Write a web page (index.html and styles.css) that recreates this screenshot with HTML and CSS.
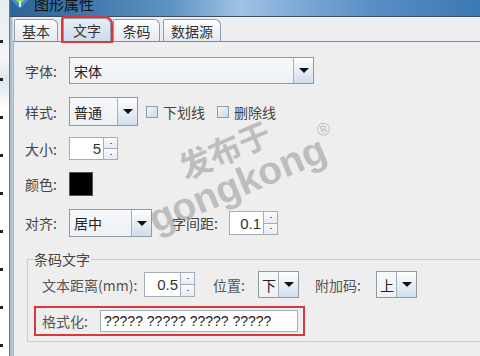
FILE: index.html
```html
<!DOCTYPE html>
<html>
<head>
<meta charset="utf-8">
<link rel="stylesheet" href="styles.css">
</head>
<body>
<div class="screen">
  <div class="behind">
    <div class="behind-line"></div>
  </div>
  <div class="window">
    <div class="titlebar">
      <svg class="app-icon" width="16" height="12" viewBox="0 0 16 12">
        <rect x="2" y="-6" width="12" height="12" transform="rotate(45 8 0)" fill="#3f8fd8"/>
        <rect x="5" y="-3" width="6" height="6" transform="rotate(45 8 0)" fill="#9ad34a"/>
        <rect x="7" y="1" width="2" height="6" fill="#ffffff" opacity="0.8"/>
      </svg>
      <span class="title">图形属性</span>
    </div>
    <div class="body">
      <div class="frame-left"></div>
      <div class="dialog">
        <div class="tabs">
          <div class="tab t1">基本</div>
          <div class="tab t2 selected">文字</div>
          <div class="tab t3">条码</div>
          <div class="tab t4">数据源</div>
        </div>
        <div class="panel">
          <div class="row r1">
            <span class="lbl">字体:</span>
            <div class="combo w-font"><span class="val">宋体</span><span class="arrow"><i></i></span></div>
          </div>
          <div class="row r2">
            <span class="lbl">样式:</span>
            <div class="combo w-style"><span class="val">普通</span><span class="arrow"><i></i></span></div>
            <span class="check c1"></span><span class="ctext">下划线</span>
            <span class="check c2"></span><span class="ctext">删除线</span>
          </div>
          <div class="row r3">
            <span class="lbl">大小:</span>
            <div class="spin w-size"><span class="num">5</span><span class="btns"><b class="up"></b><b class="dn"></b></span></div>
          </div>
          <div class="row r4">
            <span class="lbl">颜色:</span>
            <span class="swatch"></span>
          </div>
          <div class="row r5">
            <span class="lbl">对齐:</span>
            <div class="combo w-align"><span class="val">居中</span><span class="arrow"><i></i></span></div>
            <span class="lbl2">字间距:</span>
            <div class="spin w-gap"><span class="num">0.1</span><span class="btns"><b class="up"></b><b class="dn"></b></span></div>
          </div>
          <div class="group">
            <span class="legend">条码文字</span>
            <div class="grow">
              <span class="glbl">文本距离(mm):</span>
              <div class="spin w-dist"><span class="num">0.5</span><span class="btns"><b class="up"></b><b class="dn"></b></span></div>
              <span class="glbl pos">位置:</span>
              <div class="combo w-small"><span class="val">下</span><span class="arrow"><i></i></span></div>
              <span class="glbl add">附加码:</span>
              <div class="combo w-small"><span class="val">上</span><span class="arrow"><i></i></span></div>
            </div>
            <div class="fmt">
              <span class="flbl">格式化:</span>
              <div class="field">????? ????? ????? ?????</div>
            </div>
          </div>
        </div>
      </div>
    </div>
  </div>
  <div class="watermark">
    <div class="wm1">发布于</div>
    <div class="wm2">gongkong<sup>®</sup></div>
  </div>
</div>
</body>
</html>
```
FILE: styles.css
```css
* { box-sizing: border-box; }
html, body { margin: 0; padding: 0; }
body {
  width: 480px; height: 356px; overflow: hidden;
  font-family: "Noto Sans CJK SC", "Liberation Sans", sans-serif;
  font-size: 13px; color: #333;
  background: #eeeeee;
}
.screen { position: relative; display: flex; width: 480px; height: 356px; overflow: hidden; }
.behind {
  width: 10px; flex: none; height: 356px;
  background: linear-gradient(to bottom, #e8ecf0 0, #f4f6f8 60px, #dfe6ee 80px, #ffffff 110px, #ffffff 356px);
  position: relative;
  border-right: 1px solid #6d7c8c;
}
.behind-line {
  width: 3px; height: 356px;
  background: repeating-linear-gradient(to bottom, transparent 0, transparent 30px, #222 30px, #222 33px, transparent 33px, transparent 38px);
  margin-top: 10px;
}
.window { flex: 1; display: flex; flex-direction: column; min-width: 0; }
.titlebar {
  height: 17px; flex: none; overflow: hidden;
  background: linear-gradient(to right, #2d6596 0, #3a73a6 60px, #5f92c4 160px, #9fc2e4 230px, #7da9d6 290px, #5a8fc6 360px, #3c78b4 470px);
  border-bottom: 1px solid #3e4e5e;
  display: flex; align-items: flex-start;
}
.app-icon { margin-left: 2px; margin-top: 0; flex: none; }
.title {
  margin-left: 6px; margin-top: -5px;
  font-size: 15px; line-height: 18px; color: #111;
}
.body { flex: 1; display: flex; }
.frame-left { width: 3px; flex: none; background: linear-gradient(to right, #9fb2c6, #c6d2de); }
.dialog { flex: 1; background: #eeeeee; display: flex; flex-direction: column; }
.tabs {
  height: 25px; flex: none; display: flex; align-items: flex-end;
  padding-left: 1px;
  background: #ebedf1;
  border-bottom: 1px solid #7d8b99;
}
.tab {
  height: 22px; line-height: 23px; text-align: center;
  border: 1px solid #8d9aa7; border-bottom: none;
  border-radius: 2px 6px 0 0;
  background: linear-gradient(to bottom, #fbfcfd, #e6ebf0);
  font-size: 14px; color: #333;
}
.t1 { width: 44px; }
.t2 { width: 48px; margin-left: 5px; }
.t3 { width: 47px; margin-left: 2px; }
.t4 { width: 58px; margin-left: 3px; }
.tab.selected {
  background: linear-gradient(to bottom, #e6eef8, #cddbeb);
  outline: 2px solid #d8383c; outline-offset: 0;
  height: 23px;
}
.panel { flex: 1; padding-left: 11px; border-left: 1px solid #a9b4bf; }
.row { display: flex; align-items: center; }
.lbl { width: 44px; flex: none; color: #444; font-size: 14px; }
.r1 { margin-top: 15px; height: 27px; }
.r2 { margin-top: 13px; height: 29px; }
.r3 { margin-top: 11px; height: 23px; }
.r4 { margin-top: 12px; height: 24px; }
.r5 { margin-top: 13px; height: 28px; }
.combo {
  display: flex; height: 100%; flex: none;
  border: 1px solid #8e99a4;
  background: linear-gradient(to bottom, #f6f8fa, #eef1f4);
}
.combo .val { flex: 1; padding-left: 4px; display: flex; align-items: center; font-size: 14px; color: #222; }
.combo .arrow {
  width: 20px; flex: none; border-left: 1px solid #a3b0bd;
  background: linear-gradient(to bottom, #ffffff, #cfdded);
  display: flex; align-items: center; justify-content: center;
}
.combo .arrow i {
  width: 0; height: 0;
  border-left: 5px solid transparent; border-right: 5px solid transparent;
  border-top: 5px solid #111;
}
.w-font { width: 245px; }
.w-style { width: 69px; }
.w-align { width: 83px; }
.w-small { width: 41px; height: 27px; }
.w-small .val { padding-left: 3px; }
.check {
  width: 12px; height: 12px; flex: none;
  border: 1px solid #8c9cac;
  background: linear-gradient(135deg, #f2f6fa, #cad8e6);
}
.c1 { margin-left: 8px; }
.c2 { margin-left: 12px; }
.ctext { margin-left: 5px; font-size: 14px; color: #444; }
.spin {
  display: flex; height: 100%; flex: none;
  border: 1px solid #a3adb7; background: #fff;
}
.spin .num { flex: 1; text-align: right; padding-right: 2px; font-family: "Liberation Sans", sans-serif; font-size: 15px; color: #333; display: flex; align-items: center; justify-content: flex-end; }
.spin .btns { width: 14px; flex: none; display: flex; flex-direction: column; border-left: 1px solid #a3adb7; }
.spin .btns b {
  flex: 1; background: linear-gradient(to bottom, #fafbfc, #e7ecf1);
  display: flex; align-items: center; justify-content: center;
}
.spin .btns b.up { border-bottom: 1px solid #a3adb7; }
.spin .btns b::after { content: ""; width: 2px; height: 1px; background: #777; }
.w-size { width: 49px; }
.w-gap { width: 49px; height: 24px; }
.w-dist { width: 51px; height: 25px; }
.swatch { width: 24px; height: 24px; background: #000; border: 1px solid #555; }
.lbl2 { margin-left: 20px; width: 57px; flex: none; color: #444; font-size: 14px; }
.group {
  position: relative;
  margin-top: 22px; margin-left: 2px;
  border: 1px solid #c9cdd1; border-right: none;
  padding: 11px 0 5px 6px;
}
.legend {
  position: absolute; top: -9px; left: 5px;
  background: #eeeeee; padding: 0 1px; line-height: 16px;
  color: #444; font-size: 14px;
}
.grow { display: flex; align-items: center; height: 27px; padding-left: 8px; }
.glbl { color: #555; font-size: 14px; }
.grow .glbl:first-child { width: 102px; }
.pos { margin-left: 18px; width: 45px; }
.add { margin-left: 16px; width: 61px; }
.fmt {
  margin-top: 8px; width: 271px; height: 30px;
  border: 2px solid #d43a3e;
  display: flex; align-items: center;
  padding-left: 6px;
}
.flbl { width: 58px; flex: none; color: #555; font-size: 14px; }
.field {
  width: 198px; height: 22px; background: #fff;
  border: 1px solid #a3adb7;
  font-family: "Liberation Sans", sans-serif; font-size: 14px; color: #222;
  line-height: 20px; padding-left: 3px; white-space: nowrap; overflow: hidden;
}
.watermark {
  position: absolute; left: 117px; top: 142px;
  transform: rotate(-23deg); transform-origin: 0 0;
  color: rgba(140, 140, 140, 0.5);
  font-family: "Liberation Sans", "Noto Sans CJK SC", sans-serif;
  font-weight: bold; pointer-events: none;
}
.wm1 { font-family: "Noto Sans CJK SC", sans-serif; font-size: 32px; line-height: 36px; margin-left: 48px; margin-top: 30px; margin-bottom: -18px; }
.wm2 { font-size: 39px; line-height: 42px; margin-left: 0; }
.wm2 sup { font-size: 18px; font-weight: normal; vertical-align: 24px; margin-left: 0; }
```
